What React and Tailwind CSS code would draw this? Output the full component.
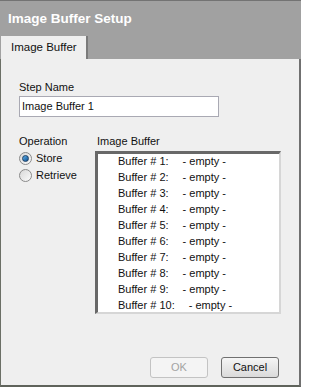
import React from "react";

const buffers = [1, 2, 3, 4, 5, 6, 7, 8, 9, 10];

const Radio = ({ checked, label }) => {
  return (
    <div className="flex items-center h-[17px]">
      <div className="flex items-center justify-center w-[13px] h-[13px] rounded-full border border-[#8a8a8a] bg-gradient-to-br from-[#d8d8d8] to-[#fbfbfb]">
        {checked && (
          <div className="w-[7px] h-[7px] rounded-full bg-gradient-to-br from-[#5fb2ec] to-[#0c4f8f] border border-[#1d3f63]"></div>
        )}
      </div>
      <span className="ml-[4px]">{label}</span>
    </div>
  );
};

const App = () => {
  return (
    <div
      className="w-[301px] h-[387px] flex flex-col text-[11px] text-[#111] bg-[#efefef]"
      style={{ fontFamily: '"Liberation Sans", Arial, sans-serif' }}
    >
      <div className="h-[59px] flex flex-col bg-[#a1a1a1] border-t border-[#737373]">
        <div className="h-[35px] pl-[8px] pt-[10px] text-[13.5px] font-bold text-white leading-[16px]">
          Image Buffer Setup
        </div>
        <div className="flex">
          <div className="w-[87px] h-[23px] ml-[1px] bg-[#efefef] border-r-2 border-[#7b7b7b] pl-[10px] leading-[23px] text-[11.5px]">
            Image Buffer
          </div>
        </div>
      </div>

      <div className="flex-1 flex flex-col border-l border-r-2 border-b-2 border-l-[#6b6f66] border-r-[#707070] border-b-[#5f635b] pl-[18px]">
        <p className="mt-[21px] leading-[14px]">Step Name</p>
        <div className="mt-[2px] w-[200px] h-[21px] border border-[#a9a9b3] bg-white pl-[2px] leading-[19px]">
          Image Buffer 1
        </div>

        <div className="flex mt-[17px]">
          <div className="w-[76px] flex flex-col">
            <p className="leading-[14px]">Operation</p>
            <div className="mt-[2px] flex flex-col">
              <Radio checked label="Store" />
              <Radio label="Retrieve" />
            </div>
          </div>
          <div className="flex flex-col">
            <p className="pl-[2px] leading-[14px]">Image Buffer</p>
            <div className="mt-[3px] w-[186px] h-[163px] bg-white border-t-[3px] border-l-[3px] border-r-2 border-b-2 border-t-[#686868] border-l-[#686868] border-r-[#d6d6d6] border-b-[#d6d6d6] pl-[20px]">
              {buffers.map((n) => (
                <div key={n} className="h-[16px] leading-[14px] whitespace-nowrap">
                  <span>Buffer # {n}:</span>
                  <span className="ml-[14px]">- empty -</span>
                </div>
              ))}
            </div>
          </div>
        </div>

        <div className="mt-auto mb-[7px] flex justify-end gap-[13px] pr-[20px]">
          <button className="w-[58px] h-[21px] rounded-[3px] border border-[#c3c3c3] bg-[#f4f4f4] text-[#a3a3a3] text-[11px]">
            OK
          </button>
          <button className="w-[58px] h-[21px] rounded-[3px] border border-[#707070] bg-gradient-to-b from-[#f5f5f5] to-[#dadada] text-[#111] text-[11px]">
            Cancel
          </button>
        </div>
      </div>
    </div>
  );
};

export default App;
